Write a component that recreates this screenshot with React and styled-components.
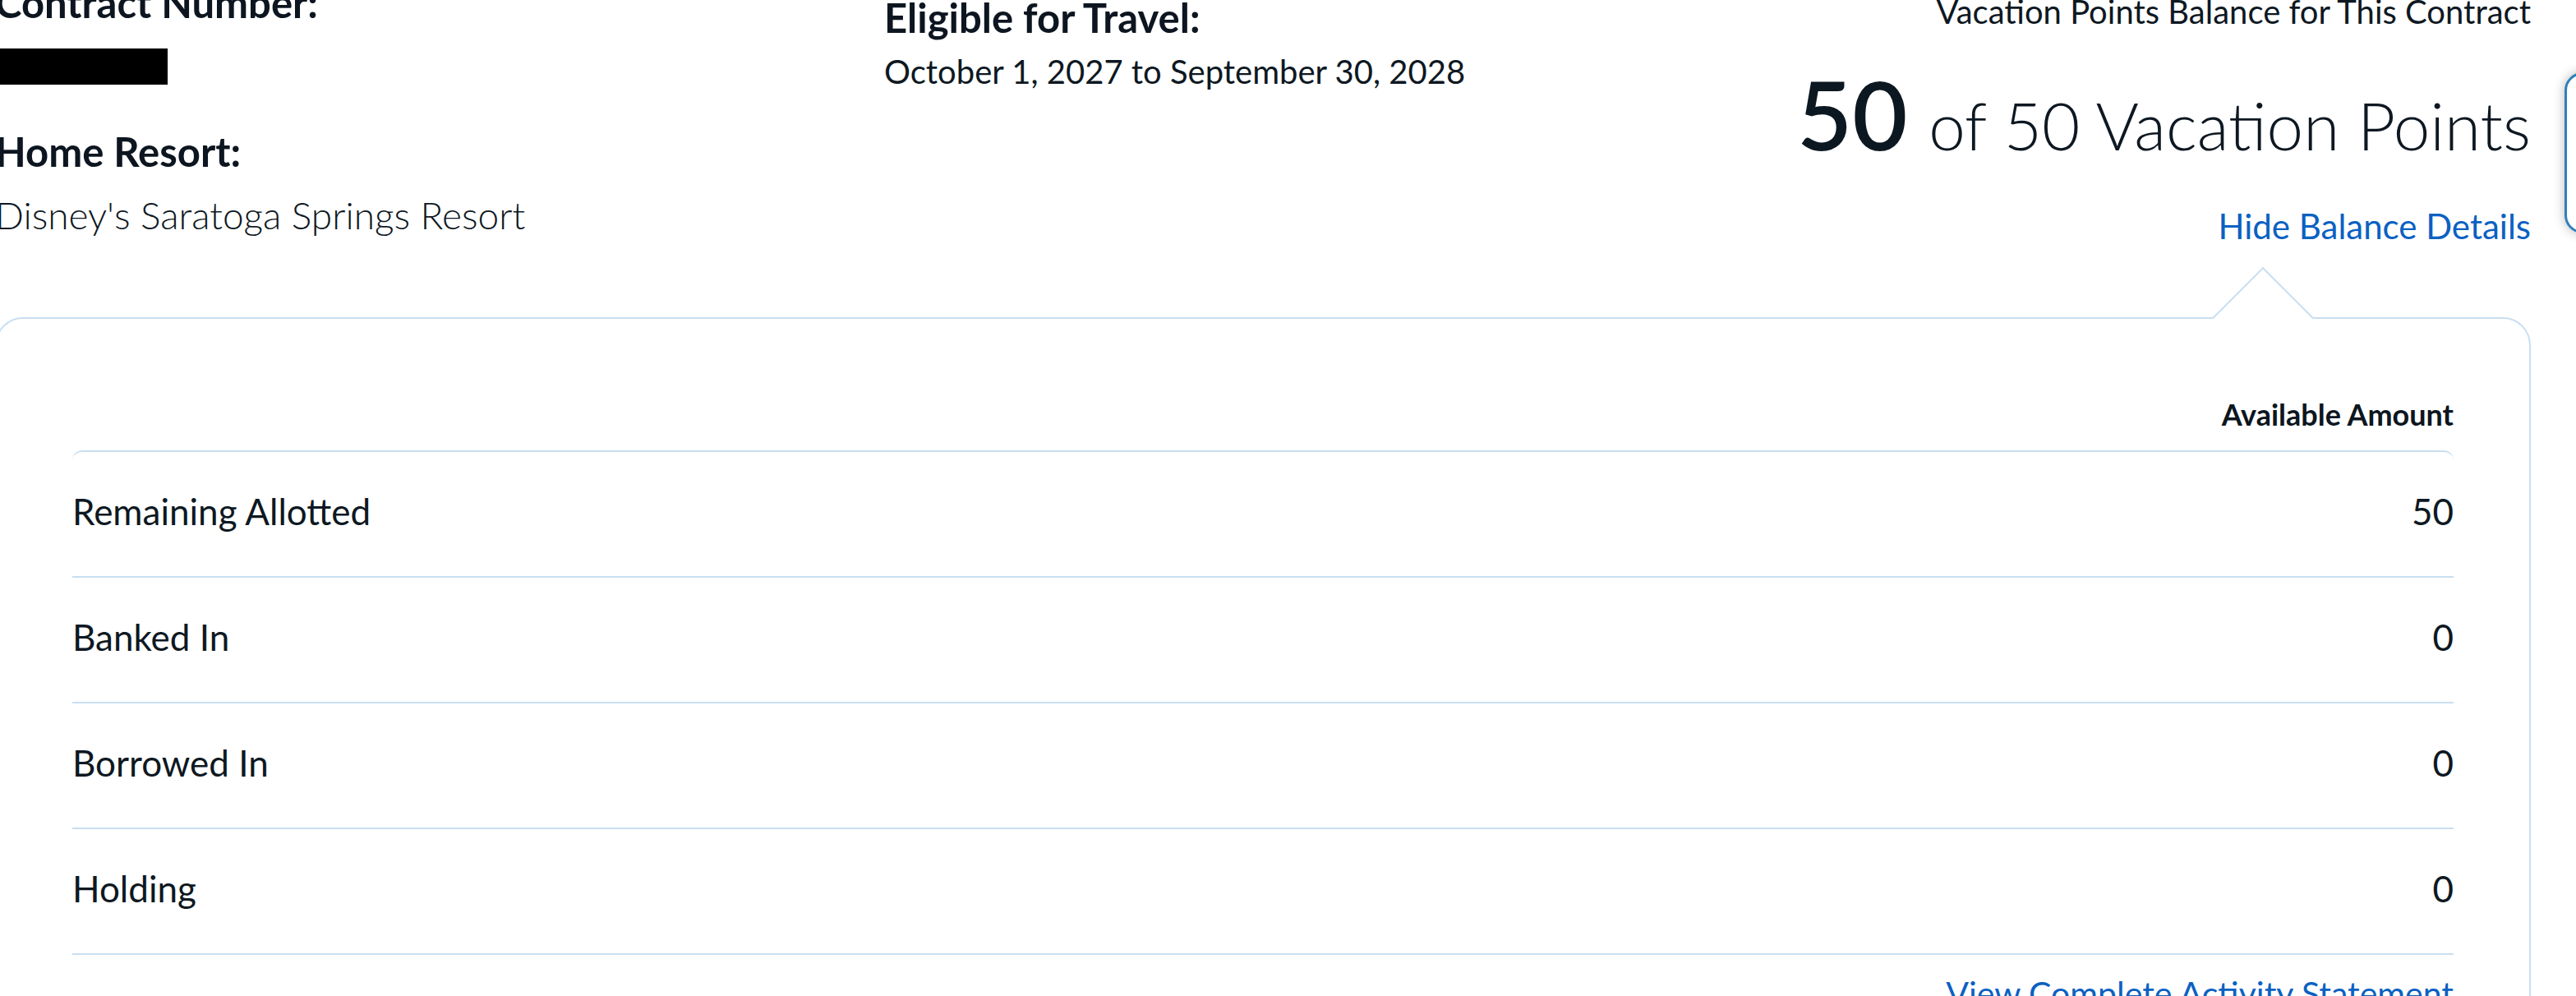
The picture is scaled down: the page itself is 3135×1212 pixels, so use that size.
import React from "react";
import styled, { createGlobalStyle } from "styled-components";

const GlobalStyle = createGlobalStyle`
  html, body {
    margin: 0;
    padding: 0;
    overflow: hidden;
    background: #ffffff;
  }
  body {
    font-family: Lato, "Open Sans", "Liberation Sans", sans-serif;
    color: #0e1822;
  }
`;

const LINE = "#c8dff2";
const LINK = "#0b61c2";

const Page = styled.main`
  margin: -26px 0 0 -6px;
  width: 3086px;
`;

const Header = styled.header`
  display: grid;
  grid-template-columns: 1082px 1fr auto;
  align-items: start;
`;

const Column = styled.div`
  display: flex;
  flex-direction: column;
  align-items: ${(p) => (p.$right ? "flex-end" : "flex-start")};
  text-align: ${(p) => (p.$right ? "right" : "left")};
  padding-top: ${(p) => p.$pt || 0}px;
`;

const Label = styled.div`
  font-size: 49px;
  font-weight: 700;
  line-height: 1.2;
  color: #0d1620;
  margin-top: ${(p) => p.$mt || 0}px;
`;

const Value = styled.div`
  font-size: ${(p) => p.$size || 44}px;
  font-weight: ${(p) => p.$weight || 300};
  line-height: 1.2;
  margin-top: ${(p) => p.$mt || 0}px;
  white-space: nowrap;
`;

const Redacted = styled.div`
  width: 210px;
  height: 44px;
  background: #000;
  margin-top: 26px;
`;

const Balance = styled.div`
  font-size: 116px;
  font-weight: 600;
  line-height: 1.2;
  margin-top: 31px;
  white-space: nowrap;
  color: #0b1721;
`;

const BalanceRest = styled.span`
  font-size: 80px;
  font-weight: 300;
  margin-left: 4px;
  color: #0e1822;
`;

const Link = styled.a`
  display: block;
  font-size: ${(p) => p.$size || 42}px;
  font-weight: 400;
  line-height: 1.2;
  color: ${LINK};
  text-decoration: none;
  margin-top: ${(p) => p.$mt || 0}px;
  text-align: right;
  white-space: nowrap;
`;

const Panel = styled.section`
  position: relative;
  margin-top: 85px;
  border: 2px solid ${LINE};
  border-radius: 34px;
  padding: 95px 92px 60px;
  background: #fff;
`;

const Arrow = styled.span`
  position: absolute;
  top: -45px;
  right: 280px;
  width: 88px;
  height: 88px;
  box-sizing: border-box;
  background: #fff;
  border-top: 2px solid ${LINE};
  border-left: 2px solid ${LINE};
  transform: rotate(45deg);
`;

const HeadRow = styled.div`
  display: flex;
  justify-content: flex-end;
  font-size: 36px;
  font-weight: 700;
  line-height: 1.2;
  margin-bottom: 22px;
  color: #0d1620;
`;

const Table = styled.div`
  border-top: 2px solid ${LINE};
  border-radius: 12px 12px 0 0;
`;

const Row = styled.div`
  box-sizing: border-box;
  height: 153px;
  display: flex;
  align-items: center;
  justify-content: space-between;
  padding-bottom: 6px;
  border-bottom: 2px solid ${LINE};
  font-size: 44px;
  line-height: 1.2;
`;

const RowLabel = styled.span`
  font-weight: 400;
`;

const RowValue = styled.span`
  font-weight: 400;
`;

const Widget = styled.div`
  position: fixed;
  left: 3121px;
  top: 88px;
  width: 240px;
  height: 196px;
  box-sizing: border-box;
  border: 3px solid #2f80bb;
  border-radius: 22px;
  background: #fff;
  box-shadow: 0 0 14px rgba(0, 0, 0, 0.28);
`;

const rows = [
  { label: "Remaining Allotted", value: 50 },
  { label: "Banked In", value: 0 },
  { label: "Borrowed In", value: 0 },
  { label: "Holding", value: 0 },
];

export default function App() {
  return (
    <>
      <GlobalStyle />
      <Page>
        <Header>
          <Column>
            <Label>Contract Number:</Label>
            <Redacted />
            <Label $mt={52}>Home Resort:</Label>
            <Value $size={46} $weight={300} $mt={20}>
              Disney's Saratoga Springs Resort
            </Value>
          </Column>
          <Column $pt={18}>
            <Label>Eligible for Travel:</Label>
            <Value $size={40} $weight={400} $mt={12}>
              October 1, 2027 to September 30, 2028
            </Value>
          </Column>
          <Column $right $pt={16}>
            <Value $size={40} $weight={400}>
              Vacation Points Balance for This Contract
            </Value>
            <Balance>
              50<BalanceRest> of 50 Vacation Points</BalanceRest>
            </Balance>
            <Link href="#" $mt={42}>
              Hide Balance Details
            </Link>
          </Column>
        </Header>
        <Panel>
          <Arrow />
          <HeadRow>Available Amount</HeadRow>
          <Table>
            {rows.map((r) => (
              <Row key={r.label}>
                <RowLabel>{r.label}</RowLabel>
                <RowValue>{r.value}</RowValue>
              </Row>
            ))}
          </Table>
          <Link href="#" $size={41} $mt={22}>
            View Complete Activity Statement
          </Link>
        </Panel>
      </Page>
      <Widget />
    </>
  );
}
